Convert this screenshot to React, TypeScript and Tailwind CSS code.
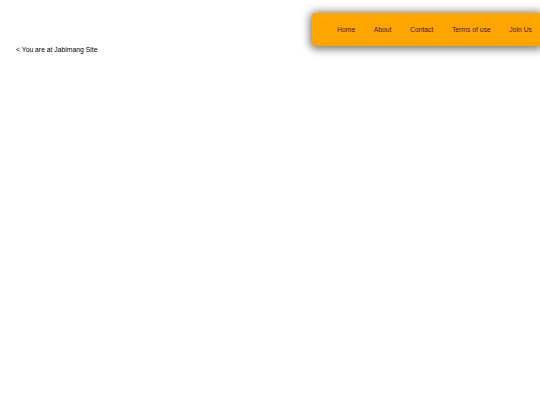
const NAV = ['Home', 'About', 'Contact', 'Terms of use', 'Join Us'];

export default function App() {
  return (
    <div className="min-h-[405px] w-[540px] overflow-hidden bg-white font-['Liberation_Sans',Arial,sans-serif]">
      {/* Header nav */}
      <div className="flex justify-end pt-[13px]">
        <nav className="flex h-[33px] items-center gap-[18.5px] rounded-l-[4px] bg-[#ffa500] pl-[25px] pr-[8px] pt-[1px] shadow-[0_1px_8px_2px_rgba(0,0,0,0.55)]">
          {NAV.map((n) => (
            <a key={n} href="#" className="text-[6.8px] leading-none text-[#45184f]">
              {n}
            </a>
          ))}
        </nav>
      </div>

      {/* Breadcrumb */}
      <p className="pl-[16px] pt-[1px] text-[6.8px] leading-[6px] text-black">&lt; You are at Jabimang Site</p>
    </div>
  );
}
